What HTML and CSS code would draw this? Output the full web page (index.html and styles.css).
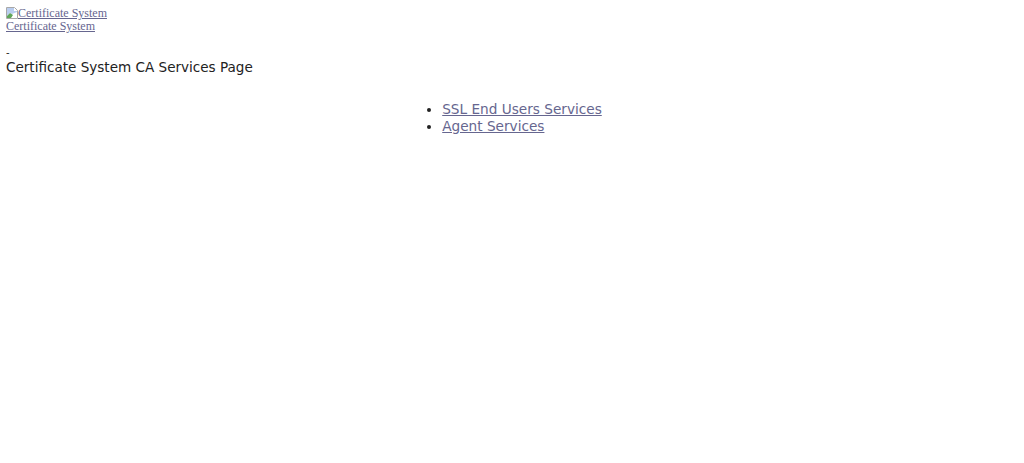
FILE: index.html
```html
<!DOCTYPE html>
<html lang="en">
<head>
    <meta charset="UTF-8">
    <title>Certificate System CA Services Page</title>
    <link rel="stylesheet" href="styles.css">
</head>
<body>
    <div class="header">
        <div class="header-row logo-row">
            <a href="#" class="logo-link">
                <svg class="broken-image" width="12" height="12" viewBox="0 0 12 12">
                    <path d="M.5 .5H8.5L11.5 3.5V11.5H.5Z" fill="#fff" stroke="#a8a8a8"/>
                    <path d="M1 1H8V4H11V5L6 7L4 6L1 9Z" fill="#b9cdf0"/>
                    <path d="M1 11V9L4 6L7 8L5 11Z" fill="#5fa55a"/>
                </svg>Certificate System</a>
        </div>
        <div class="header-row">
            <a href="#">Certificate System</a>
        </div>
    </div>
    <div class="dash">-</div>
    <div class="page-title">Certificate System CA Services Page</div>
    <div class="services">
        <ul>
            <li><a href="#">SSL End Users Services</a></li>
            <li><a href="#">Agent Services</a></li>
        </ul>
    </div>
</body>
</html>
```
FILE: styles.css
```css
body {
    margin: 0;
    padding: 5px 6px;
    background: #fff;
    color: #222;
    font-family: "DejaVu Sans", Verdana, sans-serif;
}
a {
    color: #66668f;
}
.header {
    font-family: "Liberation Serif", "Times New Roman", serif;
    font-size: 12px;
}
.header-row {
    height: 14px;
    line-height: 14px;
}
.logo-row {
    line-height: 16px;
}
.broken-image {
    vertical-align: -2px;
}
.dash {
    margin-top: 14px;
    font-size: 10px;
    line-height: 12px;
}
.page-title {
    font-size: 13.55px;
    line-height: 16px;
}
.services {
    display: flex;
    justify-content: center;
    margin-top: 26px;
    margin-left: -6px;
    margin-right: -6px;
}
.services ul {
    margin: 0;
    padding-left: 20px;
    font-size: 13.65px;
    line-height: 17px;
}
```
